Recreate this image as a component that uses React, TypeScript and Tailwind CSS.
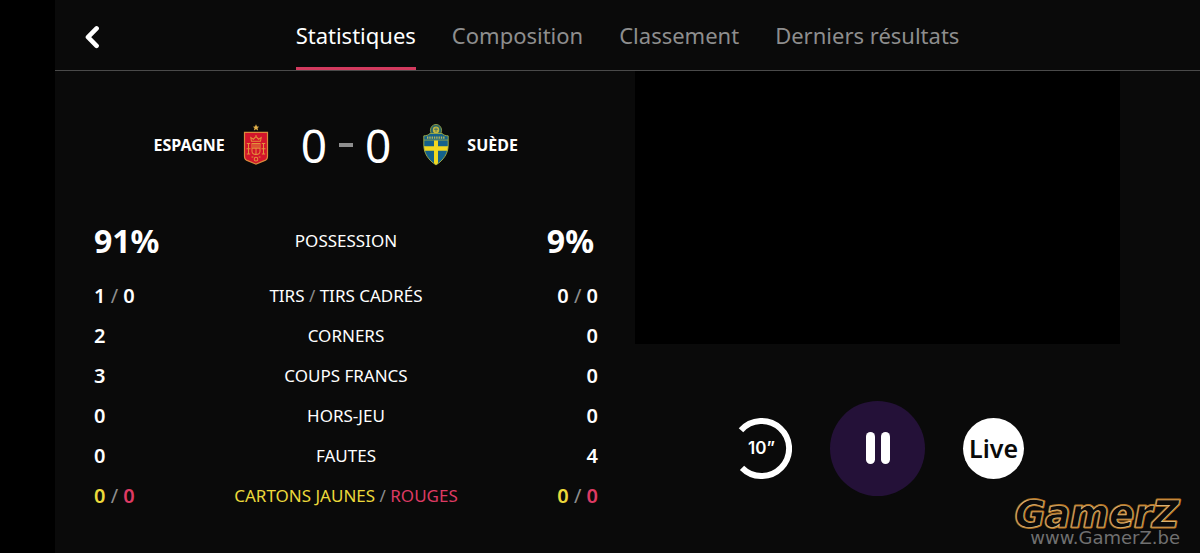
import React, { useState } from 'react';

const Tabs = ['Statistiques', 'Composition', 'Classement', 'Derniers résultats'] as const;
type Tab = (typeof Tabs)[number];

const Slash = () => <span className="font-normal text-[#8e8e8e]"> / </span>;

const Pair = ({ a, b }: { a: number; b: number }) => (
  <>
    {a}
    <Slash />
    {b}
  </>
);

const Cards = ({ yellow, red }: { yellow: React.ReactNode; red: React.ReactNode }) => (
  <>
    <span className="text-[#ecd93b]">{yellow}</span>
    <Slash />
    <span className="text-[#dd3a63]">{red}</span>
  </>
);

type Row = { label: React.ReactNode; home: React.ReactNode; away: React.ReactNode };

const rows: Row[] = [
  { label: <>TIRS<Slash />TIRS CADRÉS</>, home: <Pair a={1} b={0} />, away: <Pair a={0} b={0} /> },
  { label: 'CORNERS', home: 2, away: 0 },
  { label: 'COUPS FRANCS', home: 3, away: 0 },
  { label: 'HORS-JEU', home: 0, away: 0 },
  { label: 'FAUTES', home: 0, away: 4 },
  {
    label: <Cards yellow="CARTONS JAUNES" red="ROUGES" />,
    home: <Cards yellow={0} red={0} />,
    away: <Cards yellow={0} red={0} />,
  },
];

const ChevronIcon = () => (
  <svg className="h-6 w-4" viewBox="0 0 16 24" fill="none" stroke="currentColor" aria-hidden="true">
    <path strokeLinecap="round" strokeLinejoin="round" strokeWidth={4.6} d="M12.6 3.4L4 12.2l8.600 8.600" />
  </svg>
);

const SpainCrest = () => (
  <svg className="h-[42px] w-[26px]" viewBox="0 0 26 40" preserveAspectRatio="none" role="img" aria-label="Espagne">
    <path fill="#e2b04a" d="M13 .2l1 2.100 2.200.2-1.700 1.400.6 2.200L13 4.900l-2.100 1.200.6-2.200-1.700-1.400 2.200-.2z" />
    <path
      fill="#d3152b"
      stroke="#d98a3c"
      strokeWidth="1.2"
      d="M1.500 8h23v22.600c0 2.400-1 3.800-3.700 4.600L13 38.200l-7.800-3C2.500 34.400 1.500 33 1.500 30.600z"
    />
    <g fill="none" stroke="#e3913b" strokeWidth="1">
      <path d="M8.500 16.500L7.800 13l2.600 1.500L13 12l2.600 2.500L18.200 13l-.7 3.500zM13 12v-1.500" />
      <path d="M5.500 19v9M20.500 19v9M3.800 18.500h3.400M18.800 18.500h3.400M3.800 28.500h3.400M18.800 28.500h3.400M3.500 23.500h4M18.500 23.500h4" />
      <path d="M9 18.500h8v7.500c0 2-2 3-4 3s-4-1-4-3zM9 23h8M13 18.500V29M11 18.500V23M15 18.500V23" />
      <circle cx="13" cy="33.500" r="1.800" />
      <path d="M8.500 31.500h1.800M15.700 31.500h1.800" />
    </g>
  </svg>
);

const SwedenCrest = () => (
  <svg className="h-[42px] w-[26px]" viewBox="0 0 26 40" preserveAspectRatio="none" role="img" aria-label="Suède">
    <circle cx="13" cy="6" r="5.600" fill="#27646a" stroke="#8f9c48" strokeWidth=".9" />
    <circle cx="13" cy="5.600" r="3.200" fill="#c5b83f" />
    <path fill="none" stroke="#27646a" strokeWidth=".7" d="M13 3.500v4M11 5h4" />
    <path
      fill="#14618a"
      stroke="#9fae45"
      strokeWidth=".9"
      d="M.8 11.300c3-.1 4.700-.9 6.200-2.300h12c1.500 1.400 3.200 2.200 6.200 2.300v8.700c0 8-4.700 14.500-12.200 19C5.500 34.500.8 28 .8 20z"
    />
    <path fill="none" stroke="#b5b658" strokeWidth="2" strokeDasharray="1.400 .9" d="M4 13h18" />
    <path stroke="#9fae45" strokeWidth=".8" d="M1 15.300h24" />
    <path fill="#f0d820" d="M11 15.600h4v5.600h10l-.7 4.300H15v11.900l-2 1.500-2-1.500V25.500H1.700L1 21.200h10z" />
  </svg>
);

const Watermark = () => (
  <svg
    className="pointer-events-none absolute right-4 bottom-1 h-14 w-[176px]"
    viewBox="0 0 176 56"
    role="img"
    aria-label="GamerZ"
  >
    <defs>
      <text
        id="wordmark"
        x="7"
        y="34"
        strokeLinejoin="round"
        className="font-['DejaVu_Sans',sans-serif] text-[37px] font-bold italic"
      >
        GamerZ
      </text>
    </defs>
    <use href="#wordmark" fill="#0a0a0a" stroke="#b87522" strokeWidth="2.800" />
    <use href="#wordmark" fill="#0a0a0a" stroke="#e3c184" strokeWidth=".7" />
    <text x="172" y="51" textAnchor="end" fill="#707070" className="font-['DejaVu_Sans',sans-serif] text-[18px]">
      www.GamerZ.be
    </text>
  </svg>
);

export default function App() {
  const [activeTab, setActiveTab] = useState<Tab>('Statistiques');
  const [playing, setPlaying] = useState(true);

  return (
    <div className="relative min-h-screen bg-black pl-[55px] font-['Noto_Sans',sans-serif] text-white">
      <div className="flex min-h-screen flex-col bg-[#0a0a0a]">
        <header className="grid h-[71px] grid-cols-[1fr_auto_1fr] border-b border-[#4a4a4a]">
          <div className="flex items-center pl-[29px]">
            <button aria-label="Retour" className="pt-1">
              <ChevronIcon />
            </button>
          </div>
          <nav className="flex gap-9">
            {Tabs.map((tab) => (
              <button
                key={tab}
                onClick={() => setActiveTab(tab)}
                className={`border-b-3 pt-1 text-[22px] ${tab === activeTab
                  ? 'border-[#d23a5e] text-white'
                  : 'border-transparent text-[#8e8e8e]'
                  }`}
              >
                {tab}
              </button>
            ))}
          </nav>
        </header>

        <main className="grid flex-1 grid-cols-[580fr_485fr] pr-20">
          <section className="pr-[37px] pl-[39px] pt-[46px]">
            {/* Score */}
            <div className="grid grid-cols-[1fr_auto_1fr] items-center gap-[18px]">
              <span className="text-right text-base font-bold">ESPAGNE</span>
              <div className="flex items-center gap-8">
                <SpainCrest />
                <div className="flex items-center gap-3 text-[46px] leading-[56px]">
                  <span>0</span>
                  <span className="h-1 w-3.5 bg-[#8e8e8e]" />
                  <span>0</span>
                </div>
                <SwedenCrest />
              </div>
              <span className="text-base font-bold">SUÈDE</span>
            </div>

            <table className="mt-[33px] w-full table-fixed text-[17px]">
              <tbody>
                <tr className="h-[70px]">
                  <td className="w-1/5 text-left text-[32px] font-bold">91%</td>
                  <th scope="row" className="w-3/5 font-normal">POSSESSION</th>
                  <td className="w-1/5 pr-1 text-right text-[32px] font-bold">9%</td>
                </tr>
                {rows.map((row, i) => (
                  <tr key={i} className="h-10">
                    <td className="text-left text-[20px] font-semibold">{row.home}</td>
                    <th scope="row" className="font-normal">{row.label}</th>
                    <td className="text-right text-[20px] font-semibold">{row.away}</td>
                  </tr>
                ))}
              </tbody>
            </table>
          </section>

          <section>
            <div className="aspect-video bg-black" />
            <div className="mt-[57px] flex items-center justify-center gap-[38px]">
              <button aria-label="Reculer de 10 secondes" className="relative grid size-[61px] place-items-center">
                <svg className="absolute inset-0 size-full" viewBox="0 0 61 61" fill="none" aria-hidden="true">
                  <path stroke="currentColor" strokeWidth="6" d="M10 12.300A27.500 27.500 0 1 1 11 49.800" />
                </svg>
                <span className="relative font-['Inter',sans-serif] text-[17px] font-semibold">10”</span>
              </button>
              <button
                aria-label={playing ? 'Pause' : 'Lecture'}
                onClick={() => setPlaying(!playing)}
                className="flex size-[95px] items-center justify-center gap-1.5 rounded-full bg-[#241138]"
              >
                {playing ? (
                  <>
                    <span className="h-8 w-[9px] rounded-full bg-white" />
                    <span className="h-8 w-[9px] rounded-full bg-white" />
                  </>
                ) : (
                  <svg className="size-9" viewBox="0 0 24 24" fill="currentColor">
                    <path d="M7 4l13 8-13 8z" />
                  </svg>
                )}
              </button>
              <button className="grid size-[61px] place-items-center rounded-full bg-white text-[25px] font-semibold text-[#0a0a0a]">
                Live
              </button>
            </div>
          </section>
        </main>
      </div>
      <Watermark />
    </div>
  );
}
